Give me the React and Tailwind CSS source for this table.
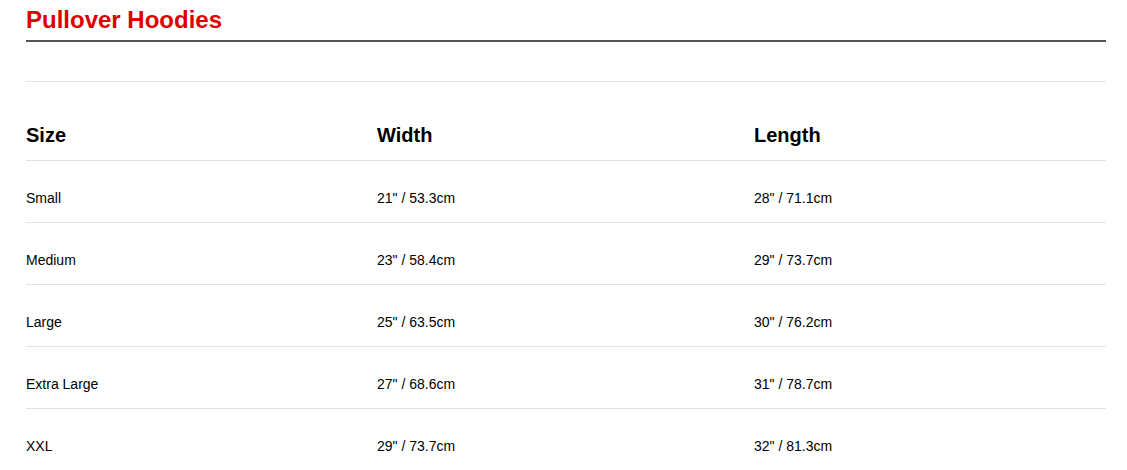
import React from 'react';

const rows = [
  { size: 'Small', width: '21" / 53.3cm', length: '28" / 71.1cm' },
  { size: 'Medium', width: '23" / 58.4cm', length: '29" / 73.7cm' },
  { size: 'Large', width: '25" / 63.5cm', length: '30" / 76.2cm' },
  { size: 'Extra Large', width: '27" / 68.6cm', length: '31" / 78.7cm' },
  { size: 'XXL', width: '29" / 73.7cm', length: '32" / 81.3cm' },
];

const App = () => {
  return (
    <div className="bg-white min-h-screen pl-[26px] pr-[21px] pt-[6px] font-['Liberation_Sans',Arial,sans-serif] text-black">
      <h2 className="text-[24px] leading-[28px] font-bold text-[#e00000]">Pullover Hoodies</h2>
      <div className="mt-[6px] h-[2px] bg-[#555555]" />
      <div className="mt-[39px] h-px bg-[#e2e2e2]" />

      {/* Size table */}
      <div className="grid grid-cols-[351px_377px_1fr] border-b border-[#e2e2e2] pt-[42px] pb-[13px] text-[20px] leading-[23px] font-bold">
        <div>Size</div>
        <div>Width</div>
        <div>Length</div>
      </div>
      {rows.map((row) => (
        <div
          key={row.size}
          className="grid grid-cols-[351px_377px_1fr] border-b border-[#e2e2e2] pt-[29px] pb-[16px] text-[14px] leading-[16px]"
        >
          <div>{row.size}</div>
          <div>{row.width}</div>
          <div>{row.length}</div>
        </div>
      ))}
    </div>
  );
};

export default App;
